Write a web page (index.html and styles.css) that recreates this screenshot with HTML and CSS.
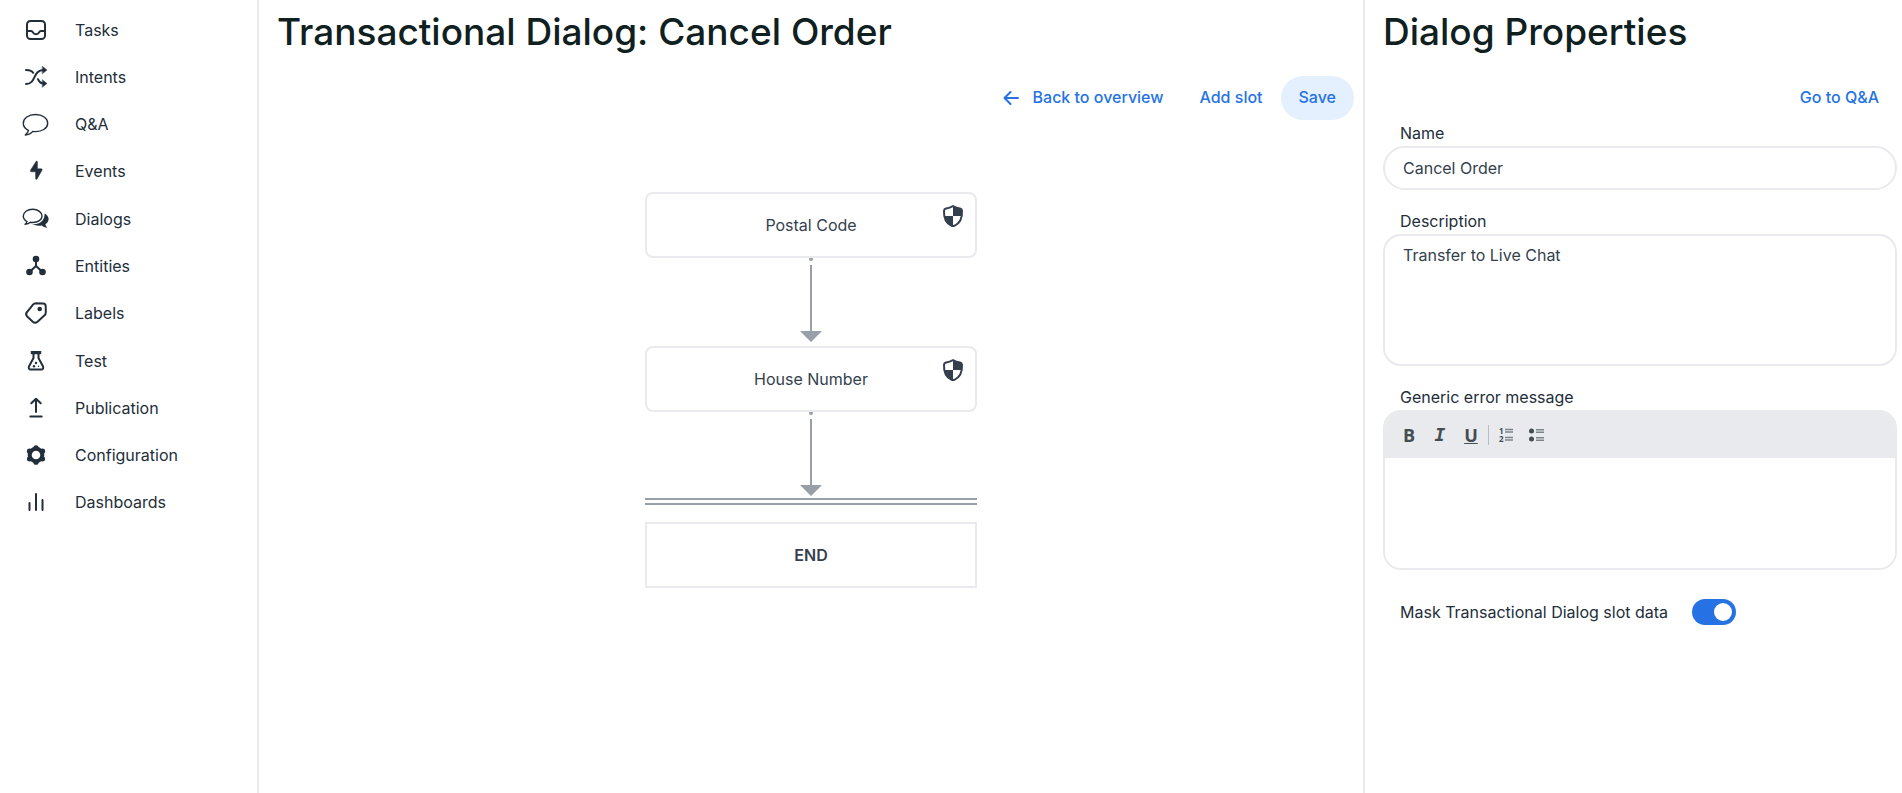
FILE: index.html
```html
<!DOCTYPE html>
<html lang="en">

<head>
  <meta charset="UTF-8">
  <meta name="viewport" content="width=device-width, initial-scale=1.0">
  <title>Transactional Dialog: Cancel Order</title>
  <link rel="stylesheet" href="styles.css">
</head>

<body>
  <div class="layout">
    <!-- Sidebar -->
    <nav class="sidebar">
      <ul class="menu">
        <li><a href="#"><svg class="icon" viewBox="0 0 28 28"><rect x="5" y="5" width="18" height="18" rx="3.5" /><path d="M5 15h4.2c1 0 1.2.5 1.7 1.4.6 1.2 1.400 1.800 3.100 1.800s2.500-.6 3.100-1.800c.5-.9.7-1.400 1.700-1.400H23" /></svg>Tasks</a></li>
        <li><a href="#"><svg class="icon" viewBox="0 0 28 28"><path d="M4 7c4 0 5.500.6 7.200 2.800M4 21c10.500 0 6.500-14 17.500-14M16 16.200c1.500 3 3 4.300 5.500 4.300" /><path class="fill" d="M20.500 3.400l4.500 3.600-4.500 3.600zM20.500 16.900l4.500 3.600-4.500 3.600z" /></svg>Intents</a></li>
        <li><a href="#"><svg class="icon thin" viewBox="0 0 28 28"><path d="M13.500 4.500C6.500 4.500 1.300 8.300 1.300 13.200c0 3.200 2 5.700 5.200 7.200-.4 1.800-1.500 3.300-3.200 4.600 3.200-.2 5.800-1.400 7.500-3.600.8.200 1.700.2 2.700.2 7 0 12.200-3.500 12.200-8.400S20.500 4.500 13.500 4.500z" /></svg>Q&amp;A</a></li>
        <li><a href="#"><svg class="icon" viewBox="0 0 28 28"><path class="fill" d="M14 4.500c.4-.8 1.400-.5 1.400.4v6.900h3.800c.9 0 1.200.7.800 1.500l-5 8.700c-.5.800-1.400.5-1.400-.4v-6.800H9.300c-.9 0-1.200-.7-.8-1.500z" /></svg>Events</a></li>
        <li><a href="#"><svg class="icon thin" viewBox="0 0 28 28"><path d="M10.700 4.300c-5.300 0-9.400 3-9.400 6.800 0 2.400 1.400 4.300 3.700 5.500-.3 1.100-.9 1.800-2 2.600 2.300 0 4.200-.7 5.300-1.900.8.200 1.500.2 2.400.2 5.300 0 9.400-2.700 9.400-6.400s-4.100-6.800-9.400-6.800z" /><path class="solid" d="M22.600 8.500c2.500 1.300 4 3.200 4 5.600 0 2.200-1.200 4-3.200 5.200.2 1.300.9 2.300 2.100 3.500-2.400-.1-4.400-.9-5.600-2.200-3.500.5-6.900.2-9.500-1.500 6.500.7 12.500-3 12.200-10.600z" /></svg>Dialogs</a></li>
        <li><a href="#"><svg class="icon" viewBox="0 0 28 28"><path d="M14 7v7M7.500 20l6.500-6 6.500 6" /><circle class="solid" cx="14" cy="7" r="3.300" /><circle class="solid" cx="7.500" cy="20" r="3.300" /><circle class="solid" cx="20.500" cy="20" r="3.300" /></svg>Entities</a></li>
        <li><a href="#"><svg class="icon" viewBox="0 0 28 28"><path d="M14 4.200l7.200.3c1.500.1 2.400 1 2.500 2.500l.1 6.200c0 1.400-.5 2.500-1.500 3.400l-6.800 6.100c-1.700 1.300-3.200 1.300-4.700 0L5.200 17.500c-1.500-1.600-1.500-3.100 0-4.700L11 5.700c.8-1 1.800-1.500 3-1.500z" /><circle class="solid" cx="17.700" cy="10" r="2.300" /></svg>Labels</a></li>
        <li><a href="#"><svg class="icon" viewBox="0 0 28 28"><path d="M9.500 5h9M9.800 6.300h8.400M11.500 5.500v5.600L7.200 19c-1.100 2.100-.3 3.600 1.800 3.600h10c2.100 0 2.900-1.500 1.800-3.600l-4.300-7.900V5.500" /><circle class="solid" cx="14" cy="16" r="1.200" /><circle class="solid" cx="12" cy="19.300" r="1.200" /><circle class="solid" cx="16.500" cy="19.300" r=".7" /></svg>Test</a></li>
        <li><a href="#"><svg class="icon" viewBox="0 0 28 28"><path d="M14 5v13M9.300 9.300L14 4.700l4.700 4.600M8.300 22.600h11.400" /></svg>Publication</a></li>
        <li><a href="#"><svg class="icon" viewBox="0 0 28 28"><circle class="ring" cx="14" cy="14" r="6.300" /><g class="solid"><circle cx="14" cy="6.800" r="2.600" /><circle cx="20.500" cy="10.200" r="2.600" /><circle cx="20.500" cy="17.800" r="2.600" /><circle cx="14" cy="21.200" r="2.600" /><circle cx="7.500" cy="17.800" r="2.600" /><circle cx="7.500" cy="10.200" r="2.600" /></g></svg>Configuration</a></li>
        <li><a href="#"><svg class="icon" viewBox="0 0 28 28"><path d="M7.500 15v7M14 6v16M20.500 12v10" /></svg>Dashboards</a></li>
      </ul>
    </nav>

    <!-- Dialog flow -->
    <main class="content">
      <h1 class="title">Transactional Dialog: Cancel Order</h1>
      <div class="actions">
        <a class="btn" href="#"><svg class="arrow-left" viewBox="0 0 16 16"><path d="M15 9H1.500M7.500 3l-6 6 6 6" /></svg>Back to overview</a>
        <button class="btn" type="button">Add slot</button>
        <button class="btn btn-primary" type="button">Save</button>
      </div>

      <div class="flow">
        <div class="node">
          Postal Code
          <svg class="shield" viewBox="0 0 22 24"><path class="outline" d="M11 2.200c2.300 1.300 4.500 2 7 2.400 1.300.2 1.900.9 2 2.200.3 6.700-2.200 12.700-7.600 15-1 .4-1.800.4-2.800 0C4.200 19.500 1.700 13.500 2 6.800c.1-1.300.7-2 2-2.200 2.500-.4 4.700-1.100 7-2.400z" /><path class="quarter" d="M11 2.200c2.300 1.300 4.500 2 7 2.400 1.300.2 1.900.9 2 2.200.1 1.900-.1 3.600-.5 5.300H11zM11 12.100V22c-4.600-.9-7.500-5-8.500-9.900z" /></svg>
        </div>
        <svg class="connector" viewBox="0 0 22 88"><circle cx="11" cy="1" r="2" /><path d="M10 7h2v66h10L11 84 0 73h10z" /></svg>
        <div class="node">
          House Number
          <svg class="shield" viewBox="0 0 22 24"><path class="outline" d="M11 2.200c2.300 1.300 4.500 2 7 2.400 1.300.2 1.900.9 2 2.200.3 6.700-2.200 12.700-7.600 15-1 .4-1.800.4-2.800 0C4.200 19.500 1.700 13.500 2 6.800c.1-1.300.7-2 2-2.200 2.500-.4 4.700-1.100 7-2.400z" /><path class="quarter" d="M11 2.200c2.300 1.300 4.500 2 7 2.400 1.300.2 1.900.9 2 2.200.1 1.900-.1 3.600-.5 5.300H11zM11 12.100V22c-4.600-.9-7.500-5-8.500-9.900z" /></svg>
        </div>
        <svg class="connector" viewBox="0 0 22 88"><circle cx="11" cy="1" r="2" /><path d="M10 7h2v66h10L11 84 0 73h10z" /></svg>
        <div class="divider"></div>
        <div class="node node-end">END</div>
      </div>
    </main>

    <!-- Properties -->
    <aside class="properties">
      <h2 class="title">Dialog Properties</h2>
      <div class="actions">
        <a class="btn" href="#">Go to Q&amp;A</a>
      </div>

      <form class="form">
        <div class="field">
          <label for="name">Name</label>
          <input class="control" type="text" id="name" value="Cancel Order">
        </div>
        <div class="field">
          <label for="description">Description</label>
          <textarea class="control" id="description">Transfer to Live Chat</textarea>
        </div>
        <div class="field">
          <label for="error-message">Generic error message</label>
          <div class="editor">
            <div class="toolbar">
              <button class="tool" type="button" aria-label="Bold">B</button>
              <button class="tool tool-italic" type="button" aria-label="Italic">I</button>
              <button class="tool" type="button" aria-label="Underline"><u>U</u></button>
              <span class="separator"></span>
              <button class="tool" type="button" aria-label="Numbered list"><svg viewBox="0 0 16 16"><text x="1" y="7">1</text><text x="1" y="15">2</text><path d="M7 2.500h8M7 5h8M7 10.500h8M7 13h8" /></svg></button>
              <button class="tool" type="button" aria-label="Bulleted list"><svg viewBox="0 0 16 16"><circle cx="2.500" cy="4" r="2.500" /><circle cx="2.500" cy="12" r="2.500" /><path d="M7 2.700h8M7 5.200h8M7 10.700h8M7 13.200h8" /></svg></button>
            </div>
            <textarea class="editor-area" id="error-message"></textarea>
          </div>
        </div>
        <div class="mask">
          <label for="mask">Mask Transactional Dialog slot data</label>
          <input class="switch" type="checkbox" id="mask" checked>
        </div>
      </form>
    </aside>
  </div>
</body>

</html>
```
FILE: styles.css
```css
* {
  box-sizing: border-box;
}

body {
  margin: 0;
  font-family: Inter, "Liberation Sans", sans-serif;
  font-size: 16px;
  line-height: 20px;
  color: #222e3a;
  background: #fff;
}

a {
  color: inherit;
  text-decoration: none;
}

button,
input,
textarea {
  font: inherit;
  color: inherit;
}

.layout {
  display: grid;
  grid-template-columns: 259px 1fr 539px;
  min-height: 100vh;
}

/* Sidebar */
.sidebar {
  padding-top: 6px;
  border-right: 2px solid #e9eaee;
}

.menu {
  display: grid;
  grid-auto-rows: 1fr;
  height: 520px;
  margin: 0;
  padding: 0;
  list-style: none;
}

.menu a {
  display: flex;
  align-items: center;
  gap: 25px;
  height: 100%;
  padding-left: 22px;
}

.icon {
  width: 28px;
  height: 28px;
  fill: none;
  stroke: #222e3a;
  stroke-width: 2;
  stroke-linecap: round;
  stroke-linejoin: round;
}

.icon.thin {
  stroke-width: 1.4;
}

.icon .fill {
  fill: #222e3a;
  stroke-width: 0.5;
}

.icon .solid {
  fill: #222e3a;
  stroke: none;
}

.icon .ring {
  stroke-width: 4;
}

/* Headings and action links */
.title {
  margin: 0;
  font-size: 37px;
  font-weight: 500;
  line-height: 64px;
  color: #10201f;
}

.actions {
  display: flex;
  justify-content: flex-end;
}

.btn {
  display: flex;
  align-items: center;
  gap: 14px;
  height: 44px;
  padding: 0 18px 2px;
  border: 0;
  border-radius: 22px;
  background: none;
  font-weight: 500;
  color: #2672e4;
}

.btn-primary {
  background: #e4f0fd;
}

.arrow-left {
  width: 16px;
  height: 16px;
  fill: none;
  stroke: #2672e4;
  stroke-width: 2;
  stroke-linecap: round;
  stroke-linejoin: round;
}

/* Dialog flow */
.content .title {
  padding-left: 18px;
}

.content .actions {
  padding: 12px 9px 0 0;
}

.flow {
  display: flex;
  flex-direction: column;
  align-items: center;
  padding-top: 72px;
}

.node {
  position: relative;
  display: flex;
  align-items: center;
  justify-content: center;
  width: 332px;
  height: 66px;
  border: 2px solid #e9eaee;
  border-radius: 8px;
  color: #343f4e;
}

.node-end {
  border-radius: 0;
  font-weight: 600;
}

.shield {
  position: absolute;
  top: 10px;
  right: 11px;
  width: 22px;
  height: 24px;
}

.shield .outline {
  fill: none;
  stroke: #343f4e;
  stroke-width: 2;
  stroke-linejoin: round;
}

.shield .quarter {
  fill: #343f4e;
}

.connector {
  width: 22px;
  height: 88px;
  overflow: visible;
  fill: #999fa9;
}

.divider {
  width: 332px;
  height: 7px;
  margin: -2px 0 17px;
  border: solid #999fa9;
  border-width: 2px 0;
}

/* Properties */
.properties {
  padding: 0 5px 0 18px;
  border-left: 2px solid #e9eaee;
}

.properties .actions {
  padding-top: 12px;
}

.form {
  display: flex;
  flex-direction: column;
  gap: 21px;
  padding-top: 3px;
}

.field {
  display: flex;
  flex-direction: column;
  gap: 3px;
}

label {
  padding-left: 17px;
}

.control {
  width: 100%;
  height: 44px;
  padding: 0 18px;
  border: 2px solid #e9eaee;
  border-radius: 22px;
  background: #fff;
  color: #343f4e;
}

textarea.control {
  height: 132px;
  padding: 9px 18px;
  border-radius: 18px;
  resize: none;
}

.editor {
  border: 2px solid #e9eaee;
  border-radius: 18px;
  overflow: hidden;
}

.toolbar {
  display: flex;
  align-items: center;
  gap: 7px;
  height: 46px;
  padding-left: 12px;
  background: #e9eaee;
}

.tool {
  display: flex;
  align-items: center;
  justify-content: center;
  width: 24px;
  height: 24px;
  padding: 0;
  border: 0;
  background: none;
  font-family: "Open Sans", sans-serif;
  font-size: 18px;
  font-weight: 700;
  color: #444e52;
}

.tool-italic {
  font-family: "DejaVu Sans Mono", monospace;
  font-style: italic;
}

.tool svg {
  width: 16px;
  height: 16px;
  overflow: visible;
  fill: #444e52;
}

.tool path {
  stroke: #7d858a;
  stroke-width: 1.5;
}

.tool text {
  font-size: 8px;
}

.separator {
  width: 1px;
  height: 20px;
  margin: 0 -2px;
  background: #b9bdc1;
}

.editor-area {
  display: block;
  width: 100%;
  height: 110px;
  padding: 9px 16px;
  border: 0;
  resize: none;
}

.mask {
  display: flex;
  align-items: center;
  gap: 24px;
  padding-top: 8px;
}

.switch {
  width: 44px;
  height: 26px;
  margin: 0;
  padding: 4px;
  border-radius: 13px;
  background: #2672e4;
  appearance: none;
}

.switch::before {
  content: "";
  display: block;
  width: 18px;
  height: 18px;
  margin-left: auto;
  border-radius: 50%;
  background: #fff;
}
```
